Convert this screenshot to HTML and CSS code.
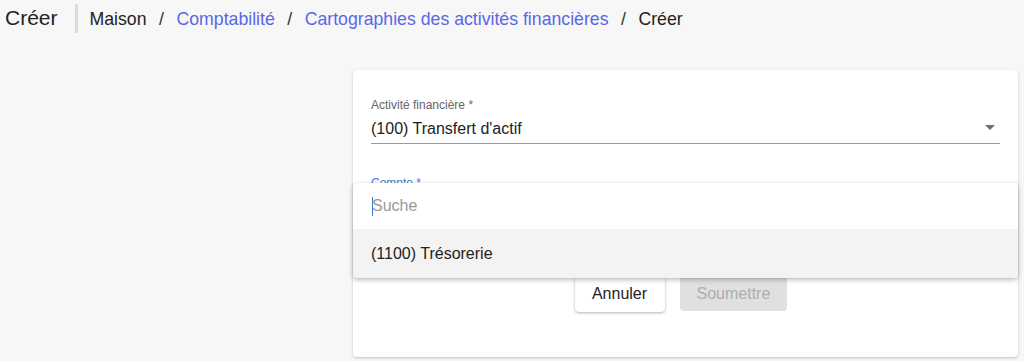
FILE: index.html
```html
<!DOCTYPE html>
<html lang="fr">
<head>
<meta charset="utf-8">
<title>Créer</title>
<link rel="stylesheet" href="styles.css">
</head>
<body>
<header class="topbar">
  <h1 class="page-title">Créer</h1>
  <span class="divider"></span>
  <nav class="crumbs">
    <span class="crumb">Maison</span>
    <span class="sep">/</span>
    <a class="crumb link" href="#">Comptabilité</a>
    <span class="sep">/</span>
    <a class="crumb link" href="#">Cartographies des activités financières</a>
    <span class="sep">/</span>
    <span class="crumb">Créer</span>
  </nav>
</header>
<main class="layout">
  <section class="card">
    <div class="field">
      <label class="field-label">Activité financière *</label>
      <div class="field-control">
        <span class="field-value">(100) Transfert d'actif</span>
        <span class="caret"></span>
      </div>
    </div>
    <div class="field field-focused">
      <label class="field-label">Compte *</label>
      <div class="field-control">
        <span class="field-value"></span>
        <span class="caret"></span>
      </div>
    </div>
    <div class="actions">
      <button class="btn btn-cancel" type="button">Annuler</button>
      <button class="btn btn-submit" type="button" disabled>Soumettre</button>
    </div>
    <div class="menu">
      <div class="menu-search"><span class="cursor"></span><span class="placeholder">Suche</span></div>
      <div class="menu-option">(1100) Trésorerie</div>
    </div>
  </section>
</main>
</body>
</html>
```
FILE: styles.css
```css
html, body {
  margin: 0;
  padding: 0;
}
body {
  background: #f7f7f7;
  font-family: "Liberation Sans", Arial, sans-serif;
  color: #222;
  height: 361px;
  overflow: hidden;
}
.topbar {
  display: flex;
  align-items: center;
  padding: 3px 0 0 5px;
  height: 30px;
}
.page-title {
  margin: 0;
  font-size: 21px;
  font-weight: normal;
  color: #222;
  line-height: 30px;
}
.divider {
  width: 3px;
  height: 29px;
  background: #dcdcdc;
  margin: 0 12px 0 17px;
}
.crumbs {
  display: flex;
  align-items: center;
  gap: 12.5px;
  font-size: 17.7px;
  line-height: 30px;
  padding-top: 2px;
}
.crumb { color: #222; text-decoration: none; }
.crumb.link { color: #5a67e6; }
.sep { color: #333; }

.layout {
  display: flex;
  padding: 37px 0 0 353px;
}
.card {
  position: relative;
  width: 629px;
  height: 287px;
  padding: 0 18px;
  background: #fff;
  border-radius: 4px;
  box-shadow: 0 1px 3px rgba(0,0,0,0.22);
}
.field {
  display: flex;
  flex-direction: column;
  padding-top: 28px;
}
.field-label {
  font-size: 12px;
  line-height: 14px;
  color: #666;
}
.field-control {
  display: flex;
  align-items: center;
  justify-content: space-between;
  height: 20px;
  margin-top: 7px;
  padding-bottom: 4px;
  border-bottom: 1px solid #9a9a9a;
}
.field-value {
  font-size: 16px;
  line-height: 20px;
  color: #222;
}
.caret {
  width: 0;
  height: 0;
  border-left: 5px solid transparent;
  border-right: 5px solid transparent;
  border-top: 5px solid #707070;
  margin-right: 5px;
  margin-top: -4px;
}
.field-focused { padding-top: 32px; }
.field-focused .field-label { color: #3b7bd4; }

.actions {
  display: flex;
  justify-content: center;
  gap: 15px;
  margin-top: 54px;
  padding-right: 10px;
}
.btn {
  font-family: "Liberation Sans", Arial, sans-serif;
  font-size: 16px;
  height: 36px;
  border: none;
  border-radius: 4px;
  padding: 0 17px;
}
.btn-cancel {
  background: #fff;
  color: #222;
  width: 90px;
  box-shadow: 0 1px 3px rgba(0,0,0,0.3);
}
.btn-submit {
  background: #e0e0e0;
  color: #adadad;
  width: 107px;
  height: 35px;
}

.menu {
  position: absolute;
  left: 0;
  right: 0;
  top: 113px;
  background: #fff;
  border-radius: 4px;
  box-shadow: 0 2px 5px rgba(0,0,0,0.25), 0 0 2px rgba(0,0,0,0.08);
  overflow: hidden;
}
.menu-search {
  display: flex;
  align-items: center;
  height: 46px;
  padding-left: 19px;
  font-size: 16px;
}
.cursor {
  width: 1px;
  height: 19px;
  background: #3b7bd4;
  margin-right: -1px;
}
.placeholder { color: #999; }
.menu-option {
  height: 49px;
  line-height: 49px;
  padding-left: 18px;
  font-size: 16px;
  background: #f3f3f3;
  color: #222;
}
```
